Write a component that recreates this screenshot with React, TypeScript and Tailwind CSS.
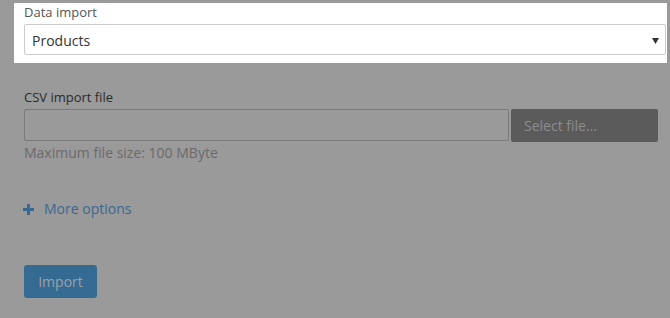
import React from "react";

export default function App() {
  return (
    <div className="min-h-[318px] w-full bg-[#9a9a9a] pt-[3px] font-['Open_Sans',sans-serif]">
      <div className="ml-[14px] h-[60px] w-[653px] bg-white pl-[10px] pr-[1px] pt-[1px]">
        <div className="text-[13px] leading-[17px] text-[#555555]">Data import</div>
        <div className="mt-[3px] flex h-[31px] items-center justify-between rounded-[2px] border border-[#cccccc] pl-[7px] pr-[6px]">
          <span className="pt-[2px] text-[14px] leading-[20px] text-[#333333]">Products</span>
          <svg width="7" height="6" viewBox="0 0 7 6" className="mt-[2px]">
            <polygon points="0,0 7,0 3.5,6" fill="#333333" />
          </svg>
        </div>
      </div>

      <div className="pl-[24px]">
        <div className="mt-[26px] text-[13px] leading-[17px] text-[#2b2b2b]">CSV import file</div>
        <div className="mt-[3px] flex items-start gap-[2px]">
          <div className="h-[32px] w-[485px] rounded-[2px] border border-[#7a7a7a] bg-[#9a9a9a]" />
          <div className="flex h-[33px] w-[147px] items-center rounded-[2px] bg-[#5b5b5b] pl-[13px] text-[14px] leading-[20px] text-[#8d8d8d]">
            Select file...
          </div>
        </div>
        <div className="mt-[1px] text-[14px] leading-[20px] text-[#6a6a6a]">Maximum file size: 100 MByte</div>

        <div className="mt-[36px] flex items-center text-[14px] leading-[20px] text-[#3b6891]">
          <svg width="11" height="11" viewBox="0 0 11 11" className="ml-[-1px] mr-[10px] mt-[1px]">
            <rect x="4" y="0" width="3" height="11" fill="#3b6891" />
            <rect x="0" y="4" width="11" height="3" fill="#3b6891" />
          </svg>
          <span>More options</span>
        </div>

        <div className="mt-[46px] flex h-[33px] w-[73px] items-center justify-center rounded-[3px] bg-[#356a93] text-[14px] leading-[20px] text-[#9aa2aa]">
          Import
        </div>
      </div>
    </div>
  );
}
